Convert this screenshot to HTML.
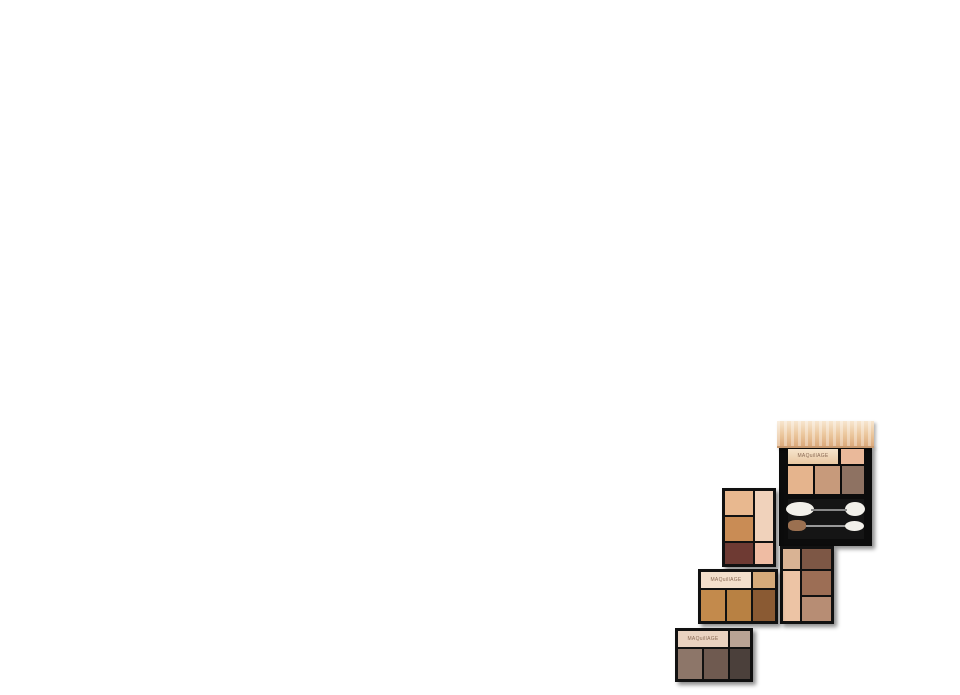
<!DOCTYPE html>
<html><head><meta charset="utf-8"><style>
*{margin:0;padding:0;box-sizing:border-box}
body{width:960px;height:695px;background:#fff;position:relative;overflow:hidden;font-family:"Liberation Sans",sans-serif}
.p{position:absolute;background:#111;box-shadow:3px 3px 4px rgba(0,0,0,.45)}
.c{position:absolute}
.t{font-size:5px;color:#8a6a55;text-align:center;letter-spacing:.3px}
</style></head><body>
<div class="p" style="left:779px;top:446px;width:93px;height:100px;background:#0c0c0c"></div>
<div class="c" style="left:777px;top:421px;width:97px;height:27px;background:repeating-linear-gradient(90deg,rgba(255,255,255,.35) 0 3px,rgba(0,0,0,0) 3px 7px),linear-gradient(180deg,#f7e6cf,#ebc69c 55%,#dcaa7c);border-bottom:2px solid #c99a70;box-shadow:2px 2px 3px rgba(0,0,0,.3)"></div>
<div class="c t" style="left:788px;top:449px;width:50px;height:15px;background:linear-gradient(#f6e4cc,#e9c8a2);line-height:15px">MAQuillAGE</div>
<div class="c" style="left:841px;top:449px;width:23px;height:15px;background:#eab99a"></div>
<div class="c" style="left:788px;top:466px;width:25px;height:28px;background:#e5b48d"></div>
<div class="c" style="left:815px;top:466px;width:25px;height:28px;background:#c79a7b"></div>
<div class="c" style="left:842px;top:466px;width:22px;height:28px;background:#8e7262"></div>
<div class="c" style="left:788px;top:499px;width:76px;height:40px;background:#151515"></div>
<div class="c" style="left:786px;top:502px;width:28px;height:14px;border-radius:50%;background:#f2f0ea"></div>
<div class="c" style="left:845px;top:502px;width:20px;height:14px;border-radius:50%;background:#f2f0ea"></div>
<div class="c" style="left:811px;top:509px;width:36px;height:2px;background:#888"></div>
<div class="c" style="left:788px;top:520px;width:18px;height:11px;border-radius:40%;background:#9b7050"></div>
<div class="c" style="left:806px;top:525px;width:40px;height:2px;background:#999"></div>
<div class="c" style="left:845px;top:521px;width:19px;height:10px;border-radius:50%;background:#f2f0ea"></div>
<div class="p" style="left:722px;top:488px;width:54px;height:79px"></div>
<div class="c" style="left:725px;top:491px;width:28px;height:24px;background:#e8b88f"></div>
<div class="c" style="left:725px;top:517px;width:28px;height:24px;background:#c98c55"></div>
<div class="c" style="left:725px;top:543px;width:28px;height:21px;background:#6e3a33"></div>
<div class="c" style="left:755px;top:491px;width:18px;height:50px;background:#f0d2bb"></div>
<div class="c" style="left:755px;top:543px;width:18px;height:21px;background:#efbca3"></div>
<div class="p" style="left:780px;top:546px;width:54px;height:78px"></div>
<div class="c" style="left:783px;top:549px;width:17px;height:20px;background:#d9b394"></div>
<div class="c" style="left:783px;top:571px;width:17px;height:50px;background:#edc4a5"></div>
<div class="c" style="left:802px;top:549px;width:29px;height:20px;background:#7d5745"></div>
<div class="c" style="left:802px;top:571px;width:29px;height:24px;background:#9c6e55"></div>
<div class="c" style="left:802px;top:597px;width:29px;height:24px;background:#b78d74"></div>
<div class="p" style="left:698px;top:569px;width:80px;height:55px"></div>
<div class="c t" style="left:701px;top:572px;width:50px;height:16px;background:#f3dfcb;line-height:16px">MAQuillAGE</div>
<div class="c" style="left:753px;top:572px;width:22px;height:16px;background:#d5aa7a"></div>
<div class="c" style="left:701px;top:590px;width:24px;height:31px;background:#c38a4c"></div>
<div class="c" style="left:727px;top:590px;width:24px;height:31px;background:#b88143"></div>
<div class="c" style="left:753px;top:590px;width:22px;height:31px;background:#8a5a33"></div>
<div class="p" style="left:675px;top:628px;width:78px;height:54px"></div>
<div class="c t" style="left:678px;top:631px;width:50px;height:16px;background:#e9d2c0;line-height:16px">MAQuillAGE</div>
<div class="c" style="left:730px;top:631px;width:20px;height:16px;background:#b9a394"></div>
<div class="c" style="left:678px;top:649px;width:24px;height:30px;background:#8d7669"></div>
<div class="c" style="left:704px;top:649px;width:24px;height:30px;background:#6f5a50"></div>
<div class="c" style="left:730px;top:649px;width:20px;height:30px;background:#4b403b"></div>
</body></html>
